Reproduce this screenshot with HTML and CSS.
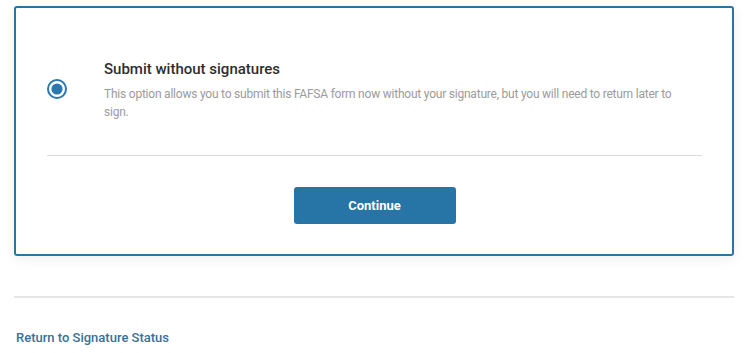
FILE: index.html
```html
<!DOCTYPE html>
<html lang="en">
<head>
<meta charset="utf-8">
<title>Submit without signatures</title>
<link rel="stylesheet" href="styles.css">
</head>
<body>
<main class="page">
  <section class="card">
    <label class="option">
      <span class="radio">
        <svg width="20" height="20" viewBox="0 0 20 20" aria-hidden="true">
          <circle cx="10" cy="10" r="9" fill="#fff" stroke="#2a78ad" stroke-width="2"/>
          <circle cx="10" cy="10" r="5.6" fill="#2a78ad"/>
        </svg>
      </span>
      <span class="option-text">
        <span class="option-title">Submit without signatures</span>
        <span class="option-desc">This option allows you to submit this FAFSA form now without your signature, but you will need to return later to sign.</span>
      </span>
    </label>
    <hr class="card-divider">
    <div class="actions">
      <button class="btn-primary" type="button">Continue</button>
    </div>
  </section>
  <hr class="page-divider">
  <a class="back-link" href="#">Return to Signature Status</a>
</main>
</body>
</html>
```

FILE: styles.css
```css
* { box-sizing: border-box; }

html, body {
  margin: 0;
  padding: 0;
  background: #ffffff;
}

body {
  font-family: Roboto, "Liberation Sans", Arial, sans-serif;
  color: #333333;
}

.page {
  padding: 6px 16px 0 14px;
}

.card {
  width: 720px;
  border: 2px solid #2a74a4;
  border-radius: 3px;
  background: #ffffff;
  box-shadow: 0 3px 12px rgba(0, 0, 0, 0.07);
  padding: 51px 30px 0 31px;
}

.option {
  display: flex;
  align-items: center;
  gap: 37px;
  margin-bottom: 34px;
}

.radio {
  flex: 0 0 20px;
  width: 20px;
  height: 20px;
  display: flex;
  margin-top: -2px;
}

.option-text {
  display: flex;
  flex-direction: column;
  gap: 6px;
  max-width: 590px;
}

.option-title {
  font-size: 15px;
  line-height: 20px;
  font-weight: 500;
  color: #2e2e2e;
}

.option-desc {
  font-size: 12px;
  line-height: 18px;
  letter-spacing: -0.22px;
  color: #9b9b9b;
}

.card-divider {
  border: 0;
  border-top: 1px solid #dcdcdc;
  margin: 0;
  height: 0;
}

.actions {
  display: flex;
  justify-content: center;
  padding: 31px 0 30px;
}

.btn-primary {
  width: 162px;
  height: 37px;
  border: 0;
  border-radius: 3px;
  background: #2774a6;
  color: #ffffff;
  font-family: Roboto, "Liberation Sans", Arial, sans-serif;
  font-size: 13px;
  font-weight: 700;
  cursor: pointer;
}

.page-divider {
  border: 0;
  border-top: 2px solid #e6e6e6;
  margin: 40px 0 0;
  width: 720px;
  height: 0;
}

.back-link {
  display: inline-block;
  margin: 32px 0 0 2px;
  font-size: 13px;
  line-height: 16px;
  font-weight: 500;
  color: #3b6f9c;
  text-decoration: none;
}
```
